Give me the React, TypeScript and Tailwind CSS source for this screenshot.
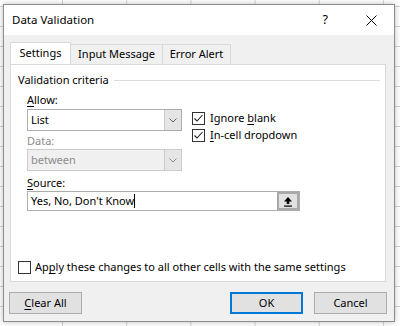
import React from "react";

const font = { fontFamily: '"Segoe UI", "Noto Sans", "Open Sans", sans-serif' };

function Chevron({ color = "#606060" }: { color?: string }) {
  return (
    <svg width="8" height="5" viewBox="0 0 8 5">
      <polyline points="0.5,0.5 4,4 7.5,0.5" fill="none" stroke={color} strokeWidth="1" />
    </svg>
  );
}

function Check({ checked }: { checked: boolean }) {
  return (
    <div className="w-[13px] h-[13px] border border-[#333333] bg-white flex items-center justify-center shrink-0">
      {checked && (
        <svg width="11" height="11" viewBox="0 0 11 11">
          <polyline points="1.5,5.5 4,8 9.5,2" fill="none" stroke="#222" strokeWidth="1.1" />
        </svg>
      )}
    </div>
  );
}

function Select({ value, disabled }: { value: string; disabled?: boolean }) {
  return (
    <div
      className={`w-[155px] h-[22px] flex border ${
        disabled ? "border-[#cccccc] bg-[#f0f0f0]" : "border-[#adadad] bg-white"
      }`}
    >
      <div className={`flex-1 flex items-center pl-[3px] ${disabled ? "text-[#8d8d8d]" : "text-black"}`}>
        {value}
      </div>
      <div
        className={`w-[17px] flex items-center justify-center ${
          disabled ? "bg-[#e6e6e6] border-l border-[#cccccc]" : "bg-[#e5e5e5] border-l border-[#cccccc]"
        }`}
      >
        <Chevron color={disabled ? "#8a8a8a" : "#606060"} />
      </div>
    </div>
  );
}

function Btn({ children, focused }: { children: React.ReactNode; focused?: boolean }) {
  return (
    <div
      className={`w-[73px] h-[22px] flex items-center justify-center bg-[#e1e1e1] ${
        focused ? "border-2 border-[#0078d7]" : "border border-[#adadad]"
      }`}
    >
      {children}
    </div>
  );
}

export default function App() {
  return (
    <div
      className="w-[400px] h-[326px] overflow-hidden pt-[4px] pl-[3px] text-[11px] text-black bg-white bg-[linear-gradient(to_right,#d4d4d4_1px,transparent_1px),linear-gradient(to_bottom,#d4d4d4_1px,transparent_1px)] bg-[size:64.2px_20px] bg-[position:62px_6px]"
      style={font}
    >
      <div className="w-[392px] h-[318px] border border-[#8c8c8c] flex flex-col shadow-[0_0_6px_rgba(0,0,0,0.25)]">
        {/* title bar */}
        <div className="h-[30px] bg-white flex items-center pl-[8px] pr-[17px]">
          <span className="flex-1 text-[11.5px]">Data Validation</span>
          <span className="text-[12.5px] mr-[38px]">?</span>
          <svg width="11" height="11" viewBox="0 0 11 11">
            <path d="M0.5 0.5 L10.5 10.5 M10.5 0.5 L0.5 10.5" stroke="#000" strokeWidth="1" />
          </svg>
        </div>

        {/* body */}
        <div className="flex-1 bg-[#f0f0f0] flex flex-col px-[6px]">
          <div className="flex items-end mt-[7px] h-[22px]">
            <div className="w-[61px] h-[22px] bg-white border border-b-0 border-[#d9d9d9] flex items-center justify-center">
              Settings
            </div>
            <div className="w-[92px] h-[20px] border border-l-0 border-b-0 border-[#d9d9d9] flex items-center justify-center">
              Input Message
            </div>
            <div className="w-[68px] h-[20px] border border-l-0 border-b-0 border-[#d9d9d9] flex items-center justify-center">
              Error Alert
            </div>
          </div>

          {/* panel */}
          <div className="w-[376px] h-[218px] bg-white border border-[#d9d9d9] flex flex-col">
            <div className="flex items-center h-[16px] mt-[7px] pl-[7px] pr-[5px]">
              <span>Validation criteria</span>
              <div className="flex-1 h-px bg-[#dcdcdc] ml-[5px]" />
            </div>

            <div className="flex pl-[16px] mt-[4px]">
              <div className="flex flex-col w-[155px]">
                <div className="h-[16px] leading-[16px]">
                  <span className="underline underline-offset-2">A</span>llow:
                </div>
                <div className="mt-[1px]">
                  <Select value="List" />
                </div>
                <div className="h-[16px] leading-[16px] mt-[2px] text-[#8d8d8d]">Data:</div>
                <div className="mt-[0px]">
                  <Select value="between" disabled />
                </div>
              </div>
              <div className="flex flex-col ml-[10px] mt-[20px] gap-[4px]">
                <div className="flex items-center h-[13px]">
                  <Check checked />
                  <span className="ml-[5px]">
                    Ignore <span className="underline underline-offset-2">b</span>lank
                  </span>
                </div>
                <div className="flex items-center h-[13px]">
                  <Check checked />
                  <span className="ml-[5px]">
                    <span className="underline underline-offset-2">I</span>n-cell dropdown
                  </span>
                </div>
              </div>
            </div>

            <div className="pl-[16px] h-[16px] leading-[16px] mt-[4px]">
              <span className="underline underline-offset-2">S</span>ource:
            </div>
            <div className="ml-[16px] mt-[0px] w-[273px] h-[20px] border border-[#adadad] flex">
              <div className="flex-1 flex items-center pl-[3px]">
                <span>Yes, No, Don't Know</span>
                <span className="w-px h-[14px] bg-black" />
              </div>
              <div className="w-[22px] h-[18px] border-2 border-[#a9a9a9] bg-[#e1e1e1] flex items-center justify-center">
                <svg width="10" height="11" viewBox="0 0 10 11">
                  <path d="M5 1 L9 5.5 L6.3 5.5 L6.3 8 L3.7 8 L3.7 5.5 L1 5.5 Z" fill="#000" />
                  <rect x="1" y="9.5" width="8" height="1.2" fill="#000" />
                </svg>
              </div>
            </div>

            <div className="flex-1" />
            <div className="flex items-center pl-[7px] mb-[7px] h-[13px]">
              <Check checked={false} />
              <span className="ml-[4px]">
                Ap<span className="underline underline-offset-2">p</span>ly these changes to all other cells with the same settings
              </span>
            </div>
          </div>

          {/* buttons */}
          <div className="flex mt-[10px] -ml-[1px]">
            <Btn>
              <span>
                <span className="underline underline-offset-2">C</span>lear All
              </span>
            </Btn>
            <div className="flex-1" />
            <Btn focused>OK</Btn>
            <div className="w-[11px]" />
            <Btn>Cancel</Btn>
            <div className="w-[1px]" />
          </div>
        </div>
      </div>
    </div>
  );
}
